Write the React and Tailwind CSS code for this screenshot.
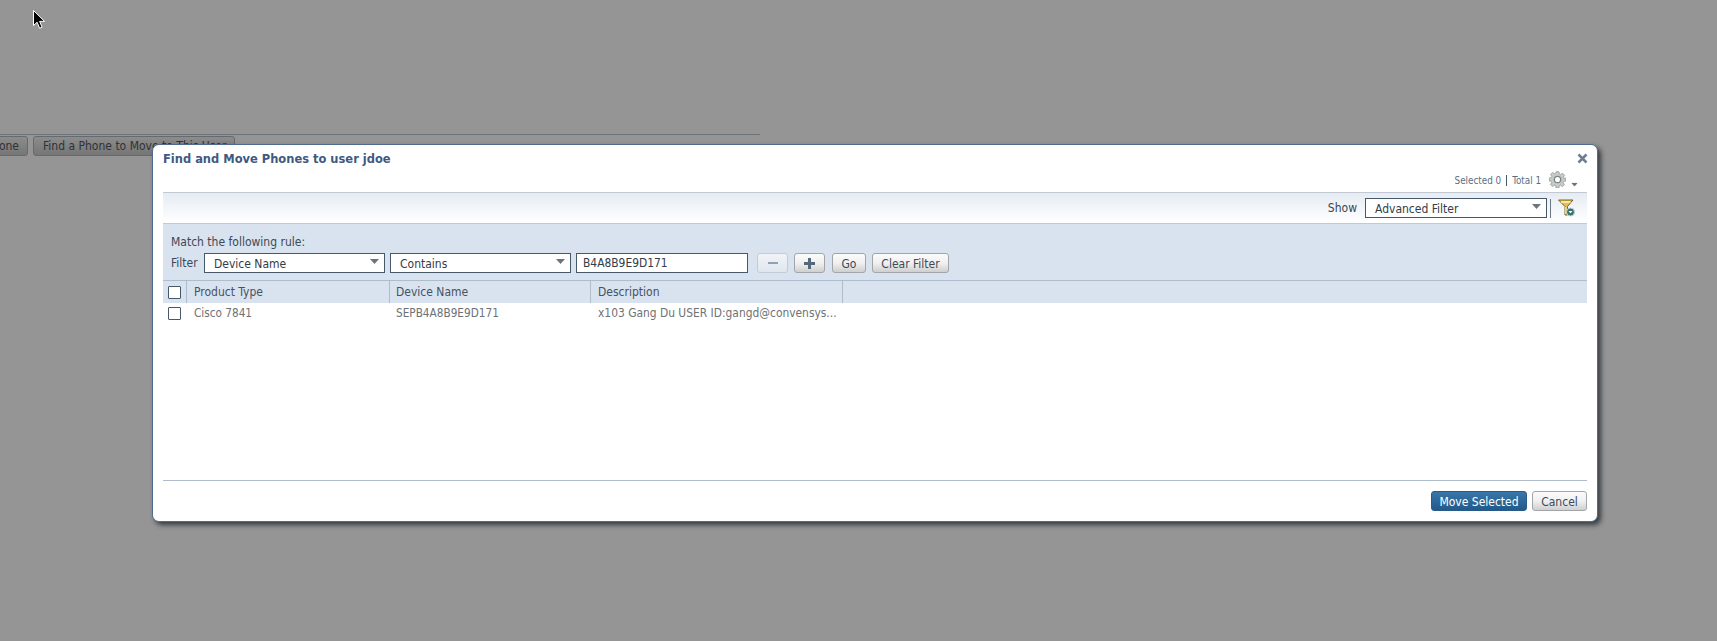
const font = { fontFamily: '"DejaVu Sans Condensed", "DejaVu Sans", sans-serif', fontStretch: "condensed" };

function Caret({ className = "" }) {
  return (
    <svg width="9" height="5" viewBox="0 0 9 5" className={className}>
      <path d="M0 0h9L4.5 5z" fill="#6b7580" />
    </svg>
  );
}

function Select({ width, label }) {
  return (
    <div className={`${width} h-[20px] bg-white border border-[#47586a] flex items-center justify-between pl-[9px] pr-[5px] text-[#333c47]`}>
      <span className="pt-px">{label}</span>
      <Caret className="mb-[4px]" />
    </div>
  );
}

function GreyButton({ children, className = "" }) {
  return (
    <div className={`h-[20px] rounded-[3px] border border-[#a3a6a8] bg-gradient-to-b from-[#fbfbfb] via-[#f0f0f0] to-[#cfcfcf] flex items-center justify-center pt-px text-[#3f4a55] ${className}`}>
      {children}
    </div>
  );
}

function Check() {
  return <div className="w-[13px] h-[13px] bg-white border border-[#47586a] rounded-[1px]" />;
}

function Gear() {
  return (
    <svg width="17" height="17" viewBox="0 0 24 24">
      <path
        d="M10 1h4l.6 3.2 1.9.8 2.7-1.8 2.8 2.8-1.8 2.7.8 1.9L24 10v4l-3.2.6-.8 1.9 1.8 2.7-2.8 2.8-2.7-1.8-1.9.8L14 24h-4l-.6-3.200-1.900-.8-2.700 1.800-2.800-2.800 1.800-2.700-.8-1.900L0 14v-4l3.200-.6.800-1.900L2.200 4.800 5 2l2.700 1.800 1.900-.8z"
        fill="#c6cbc9"
        stroke="#8b9290"
        strokeWidth="1"
      />
      <circle cx="12" cy="12" r="4.500" fill="#fff" stroke="#7d8583" strokeWidth="1.800" />
    </svg>
  );
}

function FilterIcon() {
  return (
    <svg width="18" height="18" viewBox="0 0 18 18" className="translate-x-px">
      <path d="M.5 1h14.500l-5.500 6.500V16H7V7.500z" fill="#e3be55" stroke="#7d641c" strokeWidth="1" />
      <path d="M3 3h9.500" stroke="#fff3c0" strokeWidth="1.500" />
      <path d="M7.800 8v7" stroke="#f4f1e2" strokeWidth="1" />
      <circle cx="12.500" cy="13" r="4" fill="#35716c" stroke="#c4d6d2" strokeWidth="1" />
      <path d="M10.500 12h4l-2 2.500z" fill="#fff" />
    </svg>
  );
}

function Cursor() {
  return (
    <svg width="12" height="19" viewBox="0 0 12 19" className="absolute left-[33px] top-[10px]">
      <path d="M.5.500v15l3.600-3.300 2.500 6 2.500-1-2.500-5.800h5z" fill="#000" stroke="#fff" strokeWidth="1" />
    </svg>
  );
}

function HeaderCell({ width, pad = "pl-[7px]", children }) {
  return (
    <div className={`${width} h-full border-r border-[#aebccb] ${pad} flex items-center text-[#47525f] shrink-0`}>
      {children}
    </div>
  );
}

function RowCell({ width, pad = "pl-[7px]", size = "text-[11.700px]", children }) {
  return <div className={`${width} ${pad} ${size} leading-[15px] truncate text-[#6d7276] shrink-0`}>{children}</div>;
}

export default function App() {
  return (
    <div style={font} className="relative w-[1717px] h-[641px] overflow-hidden bg-[#959595] text-[12px] leading-none">
      <Cursor />

      <div className="pt-[134px]">
        <div className="w-[800px] border-t border-[#6c737a] flex gap-[5px] items-start -ml-[40px]">
          <div className="mt-px w-[68px] h-[20px] rounded-[3px] border border-[#646a6e] bg-gradient-to-b from-[#8c8c8c] to-[#767676] flex items-center justify-end pr-[8px] text-[#2f3236]">
            one
          </div>
          <div className="mt-px w-[202px] h-[20px] rounded-[3px] border border-[#646a6e] bg-gradient-to-b from-[#8c8c8c] to-[#767676] flex items-center pl-[9px] text-[#2f3236] whitespace-nowrap">
            Find a Phone to Move to This User
          </div>
        </div>
      </div>

      <div className="absolute left-[152px] top-[144px] w-[1446px] h-[378px] bg-white rounded-[7px] border border-[#4f6b8e] shadow-[3px_3px_5px_rgba(40,45,50,0.85)] px-[10px] flex flex-col">
        <div className="h-[47px] relative shrink-0">
          <div className="pt-[8px] text-[12.750px] font-bold text-[#3f5a80]">Find and Move Phones to user jdoe</div>
          <div className="absolute right-[-1px] top-[8px]">
            <svg width="11" height="11" viewBox="0 0 11 11">
              <path d="M1.500 1.500l8 8M9.500 1.500l-8 8" stroke="#6d7f90" strokeWidth="2.500" />
            </svg>
          </div>
          <div className="absolute right-[8px] top-[26px] flex items-end">
            <div className="text-[9.800px] text-[#5a6f82] flex items-center gap-[5px] mb-[2px] mr-[8px]">
              <span>Selected 0</span>
              <span className="h-[11px] border-l border-[#47586a]" />
              <span>Total 1</span>
            </div>
            <Gear />
            <Caret className="mb-[1px] ml-[4px] scale-75" />
          </div>
        </div>

        <div className="h-[32px] shrink-0 border-t border-b border-[#c3c9d2] bg-gradient-to-b from-[#e6ecf4] to-white flex items-center justify-end text-[#3a4552] pr-[12px]">
          <span className="mr-[8px]">Show</span>
          <Select width="w-[182px]" label="Advanced Filter" />
          <span className="ml-[3px] mr-[6px] h-[19px] border-l border-[#6c7884]" />
          <FilterIcon />
        </div>

        <div className="h-[57px] shrink-0 bg-[#d8e3ef] border-b border-[#aebccb] pl-[8px] text-[#3e4855]">
          <div className="pt-[12px] h-[29px]">Match the following rule:</div>
          <div className="flex items-center">
            <span className="w-[33px]">Filter</span>
            <Select width="w-[181px]" label="Device Name" />
            <div className="w-[5px]" />
            <Select width="w-[181px]" label="Contains" />
            <div className="w-[5px]" />
            <div className="w-[172px] h-[20px] bg-white border border-[#47586a] flex items-center pl-[6px] pt-px text-[11.900px] text-[#333c47]">B4A8B9E9D171</div>
            <div className="w-[9px]" />
            <div className="w-[31px] h-[20px] rounded-[3px] border border-[#c2ccd6] bg-gradient-to-b from-[#f1f4f7] to-[#dfe6ed] flex items-center justify-center">
              <span className="w-[10px] h-[2px] bg-[#8fa0b0]" />
            </div>
            <div className="w-[6px]" />
            <GreyButton className="w-[31px]">
              <svg width="13" height="13" viewBox="0 0 13 13">
                <path d="M6.500 1v11M1 6.500h11" stroke="#55677a" strokeWidth="3" />
              </svg>
            </GreyButton>
            <div className="w-[7px]" />
            <GreyButton className="w-[34px]">Go</GreyButton>
            <div className="w-[6px]" />
            <GreyButton className="w-[77px]">Clear Filter</GreyButton>
          </div>
        </div>

        <div className="h-[22px] shrink-0 bg-[#d8e3ef] flex items-center">
          <div className="w-[24px] h-full border-r border-[#aebccb] pl-[5px] flex items-center shrink-0">
            <Check />
          </div>
          <HeaderCell width="w-[203px]">Product Type</HeaderCell>
          <HeaderCell width="w-[201px]" pad="pl-[6px]">Device Name</HeaderCell>
          <HeaderCell width="w-[252px]">Description</HeaderCell>
        </div>

        <div className="h-[20px] shrink-0 flex items-center">
          <div className="w-[24px] pl-[5px] shrink-0">
            <Check />
          </div>
          <RowCell width="w-[203px]">Cisco 7841</RowCell>
          <RowCell width="w-[201px]" pad="pl-[6px]">SEPB4A8B9E9D171</RowCell>
          <RowCell width="w-[252px]" size="text-[11.900px]">x103 Gang Du USER ID:gangd@convensys...</RowCell>
        </div>

        <div className="flex-1" />

        <div className="h-[41px] shrink-0 border-t border-[#aebccb] flex justify-end gap-[5px] pt-[10px]">
          <div className="w-[96px] h-[20px] rounded-[3px] border border-[#2a5a86] bg-gradient-to-b from-[#3a76a8] to-[#205a8c] flex items-center justify-center pt-px text-white">
            Move Selected
          </div>
          <GreyButton className="w-[55px]">Cancel</GreyButton>
        </div>
      </div>
    </div>
  );
}
